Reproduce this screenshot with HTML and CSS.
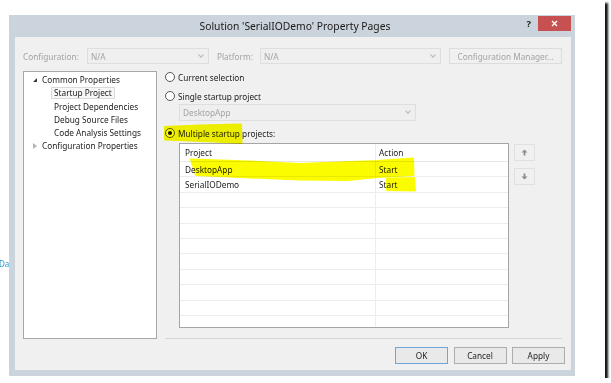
FILE: index.html
```html
<!doctype html>
<html>
<head>
  <link rel="stylesheet" href="styles.css">
</head>
<body>
<div class="shot">
  <div class="dialog">
    <div class="titlebar">
      <span></span>
      <span class="title">Solution 'SerialIODemo' Property Pages</span>
      <span class="caption-btns">
        <span class="help">?</span>
        <span class="close">
          <svg width="7" height="7" viewBox="0 0 7 7"><path d="M1 1 L6 6 M6 1 L1 6" stroke="#fff" stroke-width="1.4"/></svg>
        </span>
      </span>
    </div>

    <div class="content">
      <div class="toolbar">
        <span class="lbl lbl-config">Configuration:</span>
        <span class="combo combo-config">N/A<i class="chev"></i></span>
        <span class="lbl lbl-platform">Platform:</span>
        <span class="combo combo-platform">N/A<i class="chev"></i></span>
        <span class="btn btn-manager">Configuration Manager...</span>
      </div>

      <div class="main">
        <ul class="tree">
          <li class="node open"><i class="tri-open"></i>Common Properties</li>
          <li class="leaf"><span class="sel">Startup Project</span></li>
          <li class="leaf">Project Dependencies</li>
          <li class="leaf">Debug Source Files</li>
          <li class="leaf">Code Analysis Settings</li>
          <li class="node"><i class="tri-closed"></i>Configuration Properties</li>
        </ul>

        <div class="pane">
          <label class="radio r-current"><i class="dot"></i>Current selection</label>
          <label class="radio r-single"><i class="dot"></i>Single startup project</label>
          <span class="combo combo-project">DesktopApp<i class="chev"></i></span>
          <label class="radio r-multi"><i class="dot checked"></i>Multiple startup projects:</label>

          <div class="grid-wrap">
            <div class="grid">
              <div class="row head"><span class="c1">Project</span><span class="c2">Action</span></div>
              <div class="row"><span class="c1">DesktopApp</span><span class="c2">Start</span></div>
              <div class="row"><span class="c1">SerialIODemo</span><span class="c2">Start</span></div>
              <div class="row"><span class="c1"></span><span class="c2"></span></div>
              <div class="row"><span class="c1"></span><span class="c2"></span></div>
              <div class="row"><span class="c1"></span><span class="c2"></span></div>
              <div class="row"><span class="c1"></span><span class="c2"></span></div>
              <div class="row"><span class="c1"></span><span class="c2"></span></div>
              <div class="row"><span class="c1"></span><span class="c2"></span></div>
              <div class="row"><span class="c1"></span><span class="c2"></span></div>
              <div class="row"><span class="c1"></span><span class="c2"></span></div>
              <div class="row"><span class="c1"></span><span class="c2"></span></div>
            </div>
            <div class="movers">
              <span class="mover">
                <svg width="7" height="7" viewBox="0 0 7 7"><path d="M3.5 0.5 L6.5 3.5 H4.4 V6.5 H2.6 V3.5 H0.5 Z" fill="#8d8d8d"/></svg>
              </span>
              <span class="mover">
                <svg width="7" height="7" viewBox="0 0 7 7"><path d="M3.5 6.5 L6.5 3.5 H4.4 V0.5 H2.6 V3.5 H0.5 Z" fill="#8d8d8d"/></svg>
              </span>
            </div>
          </div>
        </div>
      </div>

      <div class="buttons">
        <span class="btn btn-dlg default">OK</span>
        <span class="btn btn-dlg">Cancel</span>
        <span class="btn btn-dlg">Apply</span>
      </div>
    </div>
  </div>

  <span class="behind">Da</span>

  <svg class="marker" width="611" height="383" viewBox="0 0 611 383">
    <path d="M165 127 L200 125.5 L241 124.5 L241.5 143 L214 141.5 L165 139.5 Z"/>
    <path d="M191 159.5 L260 162 L300 164 L377 161 L413 158.5 L413.5 175 L377 177 L348 180 L300 179.5 L240 177 L196 175 Z"/>
    <path d="M387 178.5 L414 178 L415 190.5 L387 190 Z"/>
  </svg>
</div>
</body>
</html>
```

FILE: styles.css
```css
body {
  margin : 0;
  background : #fff;
  font-family : "Noto Sans", "DejaVu Sans", sans-serif;
  font-size : 8.25px;
  color : #1a1a1a;
}
ul, li {
  list-style : none;
  padding : 0;
  margin : 0;
}
.shot {
  position : relative;
  width : 605px;
  height : 378px;
  padding : 15px 0 0 9px;
  box-sizing : border-box;
  background : #fff;
  box-shadow : 3px 3px 2px #151515;
}

/* window frame */
.dialog {
  width : 566px;
  height : 361px;
  padding : 0 4px 6px 6px;
  box-sizing : border-box;
  background : #cbd3dc;
}
.titlebar {
  display : grid;
  grid-template-columns : 1fr auto 1fr;
  align-items : center;
  height : 22px;
}
.title {
  font-size : 10.3px;
  color : #1a1a1a;
  margin-left : 4px;
}
.caption-btns {
  display : flex;
  justify-content : flex-end;
  align-self : start;
  margin-top : 1px;
}
.help {
  font-weight : bold;
  font-size : 9.5px;
  color : #222;
  margin : 0 7px 0 0;
  line-height : 15px;
}
.close {
  display : flex;
  align-items : center;
  justify-content : center;
  width : 33px;
  height : 15px;
  background : #c75050;
}

/* client area */
.content {
  width : 556px;
  height : 333px;
  background : #f0f0f0;
  display : flex;
  flex-direction : column;
}
.toolbar {
  display : flex;
  align-items : center;
  height : 16px;
  margin-top : 11px;
  padding-left : 8px;
  color : #a3a3a3;
}
.lbl-config {
  width : 64px;
}
.lbl-platform {
  width : 43px;
  margin-left : 8px;
}
.combo {
  position : relative;
  display : flex;
  align-items : center;
  height : 16px;
  padding-left : 3px;
  box-sizing : border-box;
  border : 1px solid #dedede;
  background : #efefef;
  color : #a3a3a3;
}
.combo-config {
  width : 122px;
}
.combo-platform {
  width : 181px;
}
.chev {
  position : absolute;
  right : 5px;
  top : 4px;
  width : 3px;
  height : 3px;
  border-right : 1px solid #b8b8b8;
  border-bottom : 1px solid #b8b8b8;
  transform : rotate(45deg);
}
.btn {
  display : flex;
  align-items : center;
  justify-content : center;
  box-sizing : border-box;
  border : 1px solid #dcdcdc;
  background : #f0f0f0;
}
.btn-manager {
  width : 113px;
  height : 16px;
  margin-left : 8px;
  color : #a3a3a3;
}

.main {
  display : flex;
  margin-top : 7px;
  height : 268px;
}
.tree {
  width : 134px;
  height : 268px;
  margin-left : 8px;
  padding-top : 1px;
  box-sizing : border-box;
  border : 1px solid #a8a8a8;
  background : #fff;
}
.tree li {
  display : flex;
  align-items : center;
  height : 13.25px;
}
.tree .node {
  padding-left : 9px;
}
.tree .leaf {
  padding-left : 30px;
}
.tri-open {
  width : 0;
  height : 0;
  margin-right : 5px;
  border-left : 4px solid transparent;
  border-bottom : 4px solid #3c3c3c;
}
.tri-closed {
  width : 0;
  height : 0;
  margin-right : 5px;
  border-top : 3.5px solid transparent;
  border-bottom : 3.5px solid transparent;
  border-left : 4px solid #b4b4b4;
}
.sel {
  padding : 0 2px;
  margin-left : -3px;
  line-height : 10px;
  border : 1px solid #dadada;
  background : #f7f7f7;
}

.pane {
  display : flex;
  flex-direction : column;
  width : 397px;
  margin-left : 8px;
  border-bottom : 1px solid #d5d5d5;
  box-sizing : border-box;
}
.radio {
  display : flex;
  align-items : center;
  height : 12px;
}
.r-single {
  margin-top : 7px;
}
.r-multi {
  margin-top : 6px;
}
.dot {
  position : relative;
  width : 10px;
  height : 10px;
  margin-right : 3px;
  box-sizing : border-box;
  border : 1px solid #555;
  border-radius : 50%;
  background : #fff;
}
.dot.checked::after {
  content : "";
  position : absolute;
  left : 2px;
  top : 2px;
  width : 4px;
  height : 4px;
  border-radius : 50%;
  background : #111;
}
.combo-project {
  width : 237px;
  height : 17px;
  margin : 2px 0 0 14px;
}

.grid-wrap {
  display : flex;
  margin-top : 4px;
  margin-left : 14px;
}
.grid {
  width : 330px;
  height : 185px;
  box-sizing : border-box;
  border : 1px solid #a5a5a5;
  background : #fff;
  overflow : hidden;
}
.row {
  display : flex;
  height : 14.4px;
  border-bottom : 1px solid #ededed;
}
.row.head {
  height : 17px;
  border-bottom-color : #e6e6e6;
}
.row span {
  display : flex;
  align-items : center;
}
.c1 {
  width : 196px;
  padding-left : 5px;
  box-sizing : border-box;
  border-right : 1px solid #ececec;
}
.c2 {
  padding-left : 3px;
}
.movers {
  display : flex;
  flex-direction : column;
  gap : 7px;
  margin : 1px 0 0 5px;
}
.mover {
  display : flex;
  align-items : center;
  justify-content : center;
  width : 21px;
  height : 17px;
  box-sizing : border-box;
  border : 1px solid #e0e0e0;
  background : #f0f0f0;
}

.buttons {
  display : flex;
  justify-content : flex-end;
  gap : 5.5px;
  margin-top : 8px;
  padding-right : 6px;
}
.btn-dlg {
  width : 53px;
  height : 17px;
  border-color : #adadad;
  background : #e9e9e9;
  color : #222;
}
.btn-dlg.default {
  border-color : #6fa6d9;
}

.behind {
  position : absolute;
  left : -1px;
  top : 258px;
  font-size : 8px;
  color : #2aa0d0;
}
.marker {
  position : absolute;
  left : 0;
  top : 0;
  pointer-events : none;
  mix-blend-mode : multiply;
}
.marker path {
  fill : #fcfc00;
  stroke : #fcfc00;
  stroke-width : 2;
  stroke-linejoin : round;
}
```
